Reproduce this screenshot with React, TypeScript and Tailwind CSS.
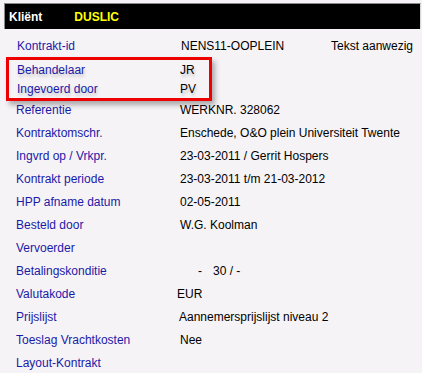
import React from "react";

type Row = { label: string; value?: React.ReactNode; extra?: string };

const topRows: Row[] = [{ label: "Kontrakt-id", value: "NENS11-OOPLEIN", extra: "Tekst aanwezig" }];

const boxedRows: Row[] = [
  { label: "Behandelaar", value: "JR" },
  { label: "Ingevoerd door", value: "PV" },
];

const restRows: Row[] = [
  { label: "Referentie", value: "WERKNR. 328062" },
  { label: "Kontraktomschr.", value: "Enschede, O&O plein Universiteit Twente" },
  { label: "Ingvrd op / Vrkpr.", value: "23-03-2011 / Gerrit Hospers" },
  { label: "Kontrakt periode", value: "23-03-2011 t/m 21-03-2012" },
  { label: "HPP afname datum", value: "02-05-2011" },
  { label: "Besteld door", value: "W.G. Koolman" },
  { label: "Vervoerder" },
  {
    label: "Betalingskonditie",
    value: (
      <span className="flex">
        <span className="ml-[18px]">-</span>
        <span className="ml-[11px]">30 / -</span>
      </span>
    ),
  },
  { label: "Valutakode", value: <span className="-ml-[3px]">EUR</span> },
  { label: "Prijslijst", value: <span className="-ml-[1px]">Aannemersprijslijst niveau 2</span> },
  { label: "Toeslag Vrachtkosten", value: "Nee" },
  { label: "Layout-Kontrakt" },
];

function App() {
  return (
    <div
      className="w-[422px] h-[373px] overflow-hidden bg-[#f6f3f6] text-[12px]"
      style={{ fontFamily: '"Liberation Sans", Arial, sans-serif' }}
    >
      {/* header bar */}
      <div className="ml-[4px] mt-[3px] w-[417px] h-[26px] flex items-center gap-[32px] pl-[4px] bg-black border-t border-l border-[#8a8a8a] border-r border-r-[#d8d8d8]">
        <span className="text-white font-bold">Kliënt</span>
        <span className="text-[#ffff00] font-bold">DUSLIC</span>
      </div>

      <div className="mt-[5px]">
        {topRows.map((r) => (
          <div key={r.label} className="flex items-center h-[23px] pl-[17px]">
            <span className="w-[164px] text-[#1a1aa8]">{r.label}</span>
            <span className="w-[150px] text-black">{r.value}</span>
            <span className="text-black">{r.extra}</span>
          </div>
        ))}

        {/* highlighted rows */}
        <div className="relative z-10 ml-[6px] w-[206px] border-[3px] border-[#ee0000] shadow-[3px_4px_5px_rgba(0,0,0,0.3)]">
          {boxedRows.map((r) => (
            <div key={r.label} className="flex items-center h-[19px] pl-[8px]">
              <span className="w-[163px] text-[#1a1aa8] [text-shadow:1px_3px_3px_rgba(0,0,0,0.18)]">{r.label}</span>
              <span className="text-black [text-shadow:1px_3px_3px_rgba(0,0,0,0.18)]">{r.value}</span>
            </div>
          ))}
        </div>

        <div className="-mt-[3px]">
          {restRows.map((r) => (
            <div key={r.label} className="flex items-center h-[23px] pl-[16px]">
              <span className="w-[164px] shrink-0 text-[#1a1aa8]">{r.label}</span>
              <span className="text-black">{r.value}</span>
            </div>
          ))}
        </div>
      </div>
    </div>
  );
}

export default App;
